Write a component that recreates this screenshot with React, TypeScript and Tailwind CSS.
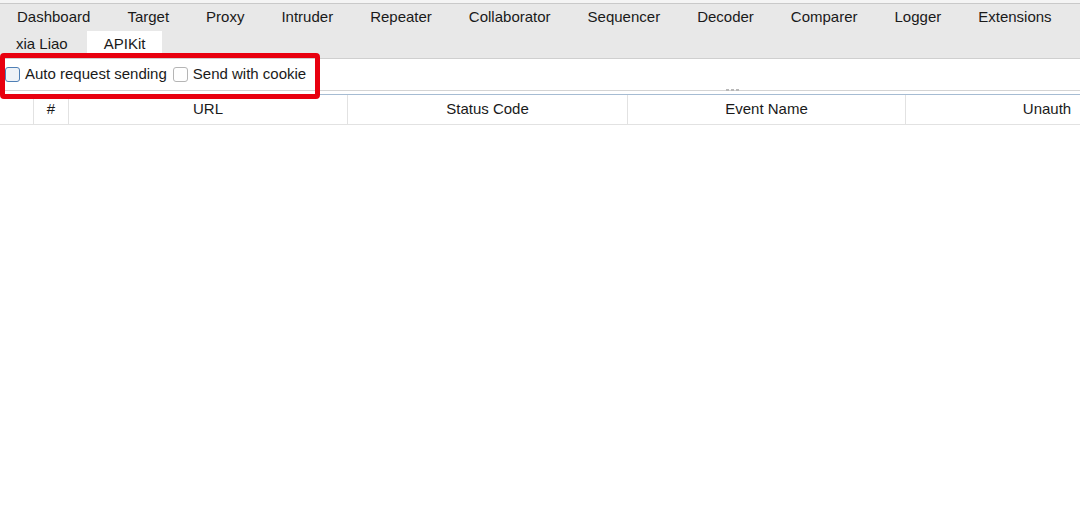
import React from 'react';

const topTabs = ['Dashboard', 'Target', 'Proxy', 'Intruder', 'Repeater', 'Collaborator', 'Sequencer', 'Decoder', 'Comparer', 'Logger', 'Extensions'];

const columns = [
  { name: '', width: 'w-[34px]' },
  { name: '#', width: 'w-[35px]' },
  { name: 'URL', width: 'w-[279px]' },
  { name: 'Status Code', width: 'w-[280px]' },
  { name: 'Event Name', width: 'w-[278px]' },
  { name: 'Unauth', width: 'w-[282px]' },
];

function Checkbox({ focused }: { focused?: boolean }) {
  return (
    <span
      className={
        focused
          ? 'block w-[15px] h-[15px] rounded-[3px] border border-[#4f7fb5] bg-[#eef2f7] shrink-0'
          : 'block w-[15px] h-[15px] rounded-[3px] border border-[#b5b5b5] bg-white shrink-0'
      }
    />
  );
}

export default function App() {
  return (
    <div
      className="relative w-[1080px] h-[511px] bg-white overflow-hidden text-[15px] text-[#1a1a1a]"
      style={{ fontFamily: '"Liberation Sans", Arial, sans-serif' }}
    >
      {/* Tab bar */}
      <div className="h-[4px] bg-[#f4f4f4] border-b border-[#c9c9c9]" />
      <div className="bg-[#e8e8e8] border-b border-[#cfcfcf]">
        <div className="flex h-[27px] items-center pl-[17px] gap-[37px]">
          {topTabs.map((t) => (
            <span key={t} className="whitespace-nowrap">{t}</span>
          ))}
        </div>
        <div className="flex h-[27px] items-end">
          <div className="h-full flex items-center pl-[16px] pr-[19px]">xia Liao</div>
          <div className="h-full flex items-center px-[17px] bg-white">APIKit</div>
        </div>
      </div>

      {/* Options row */}
      <div className="flex items-center h-[31px] pl-[5px]">
        <Checkbox focused />
        <span className="ml-[5px]">Auto request sending</span>
        <span className="ml-[6px]"><Checkbox /></span>
        <span className="ml-[5px]">Send with cookie</span>
      </div>

      {/* Splitter */}
      <div className="relative h-[5px] border-t border-[#d4d4d4] border-b border-b-[#a6bcd3]">
        <div className="absolute left-[726px] top-[-2px] flex gap-[2px]">
          <span className="w-[3px] h-[2px] bg-[#b8b8b8]" />
          <span className="w-[3px] h-[2px] bg-[#b8b8b8]" />
          <span className="w-[3px] h-[2px] bg-[#b8b8b8]" />
        </div>
      </div>

      {/* Table header */}
      <div className="flex h-[30px] border-b border-[#e2e2e2]">
        {columns.map((c, i) => (
          <div
            key={i}
            className={`${c.width} shrink-0 flex items-center justify-center whitespace-nowrap ${i < columns.length - 1 ? 'border-r border-[#e2e2e2]' : ''}`}
          >
            {c.name}
          </div>
        ))}
      </div>

      {/* Red annotation box */}
      <div className="absolute left-0 top-[53px] w-[320px] h-[46px] border-[5px] border-[#e8000f] rounded-[4px]" />
    </div>
  );
}
